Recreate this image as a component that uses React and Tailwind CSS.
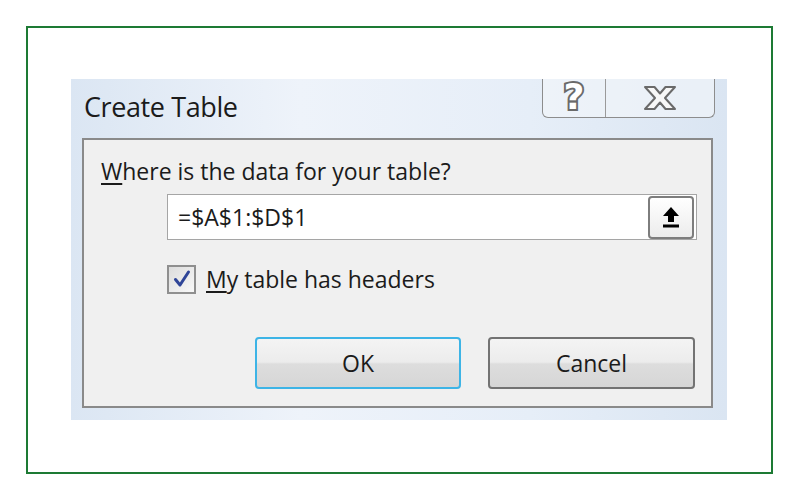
import React from 'react'

const FONT = "font-['Open_Sans','Noto_Sans',sans-serif]"

function UploadIcon() {
  return (
    <svg width="20" height="24" viewBox="0 0 20 24">
      <path d="M10 2 L18 11 L13 11 L13 17 L7 17 L7 11 L2 11 Z" fill="#000" />
      <rect x="2" y="19.5" width="16" height="3" fill="#000" />
    </svg>
  )
}

function CloseGlyph() {
  return (
    <svg width="36" height="28" viewBox="0 0 36 28">
      <path
        d="M3 3 H12.5 L18 9.5 L23.5 3 H33 L23 14 L33 25 H23.5 L18 18.5 L12.5 25 H3 L13 14 Z"
        fill="#f7f7f7"
        stroke="#6a6a6a"
        strokeWidth="2"
        strokeLinejoin="round"
      />
    </svg>
  )
}

function CheckMark() {
  return (
    <svg width="20" height="20" viewBox="0 0 20 20">
      <path d="M3.5 10.5 L8 16 L16.5 3" fill="none" stroke="#2f4598" strokeWidth="3" strokeLinecap="round" strokeLinejoin="round" />
    </svg>
  )
}

export default function App() {
  return (
    <div className={`w-[800px] h-[500px] bg-white pt-[26px] pl-[26px] ${FONT}`}>
      <div className="w-[747px] h-[448px] border-2 border-[#1d7a34] pl-[43px] pt-[51px]">
        {/* dialog window */}
        <div className="w-[656px] h-[341px] flex flex-col bg-[linear-gradient(90deg,#dbe6f3_0%,#eef3fa_35%,#e6eef8_70%,#dae5f2_100%)]">
          <div className="h-[59px] flex justify-between">
            <div className="pl-[13px] pt-[8px] text-[27px] tracking-[-0.4px] text-[#1b1b1b]">Create Table</div>
            <div className="mr-[12px] h-[39px] flex border border-t-0 border-[#8d8d8d] rounded-b-[6px] bg-[#f3f6fa]/60">
              <div className="w-[63px] flex justify-center border-r border-[#9a9a9a] pt-[2px] font-['DejaVu_Sans',sans-serif] text-[36px] font-bold leading-[32px] text-white [-webkit-text-stroke:4px_#6a6a6a] [paint-order:stroke_fill]">
                ?
              </div>
              <div className="w-[108px] flex items-center justify-center">
                <CloseGlyph />
              </div>
            </div>
          </div>

          {/* client panel */}
          <div className="ml-[11px] w-[631px] h-[270px] border-2 border-[#8a8a8a] bg-[#f0f0f0] text-[#1b1b1b]">
            <div className="pl-[17px] pt-[15px] text-[23px] leading-[32px]">
              <span className="underline underline-offset-[3px] decoration-[1.5px]">W</span>here is the data for your table?
            </div>

            <div className="ml-[83px] mt-[7px] w-[530px] h-[46px] flex items-center justify-between bg-white border border-[#a5a5a5] pl-[10px] pr-[2px]">
              <span className="text-[23px]">=$A$1:$D$1</span>
              <div className="w-[46px] h-[43px] flex items-center justify-center rounded-[4px] border-2 border-[#7d7d7d] bg-[linear-gradient(#ffffff,#ececec)]">
                <UploadIcon />
              </div>
            </div>

            <div className="ml-[83px] mt-[24px] flex items-center gap-[10px]">
              <div className="w-[29px] h-[29px] border-2 border-[#8f8f8f] bg-[linear-gradient(135deg,#dcdcdc,#f8f8f8)] flex items-center justify-center">
                <CheckMark />
              </div>
              <span className="text-[23px] leading-[30px]">
                <span className="underline underline-offset-[3px] decoration-[1.5px]">M</span>y table has headers
              </span>
            </div>

            <div className="mt-[43px] pr-[16px] flex justify-end gap-[27px]">
              <button className="w-[206px] h-[52px] rounded-[4px] border-2 border-[#3db4e6] bg-[linear-gradient(#f4f4f4_0%,#ececec_48%,#dddddd_52%,#d6d6d6_100%)] text-[23px] text-[#1b1b1b]">
                OK
              </button>
              <button className="w-[207px] h-[52px] rounded-[4px] border-2 border-[#737373] bg-[linear-gradient(#f4f4f4_0%,#ececec_48%,#dddddd_52%,#d6d6d6_100%)] text-[23px] text-[#1b1b1b]">
                Cancel
              </button>
            </div>
          </div>
        </div>
      </div>
    </div>
  )
}
